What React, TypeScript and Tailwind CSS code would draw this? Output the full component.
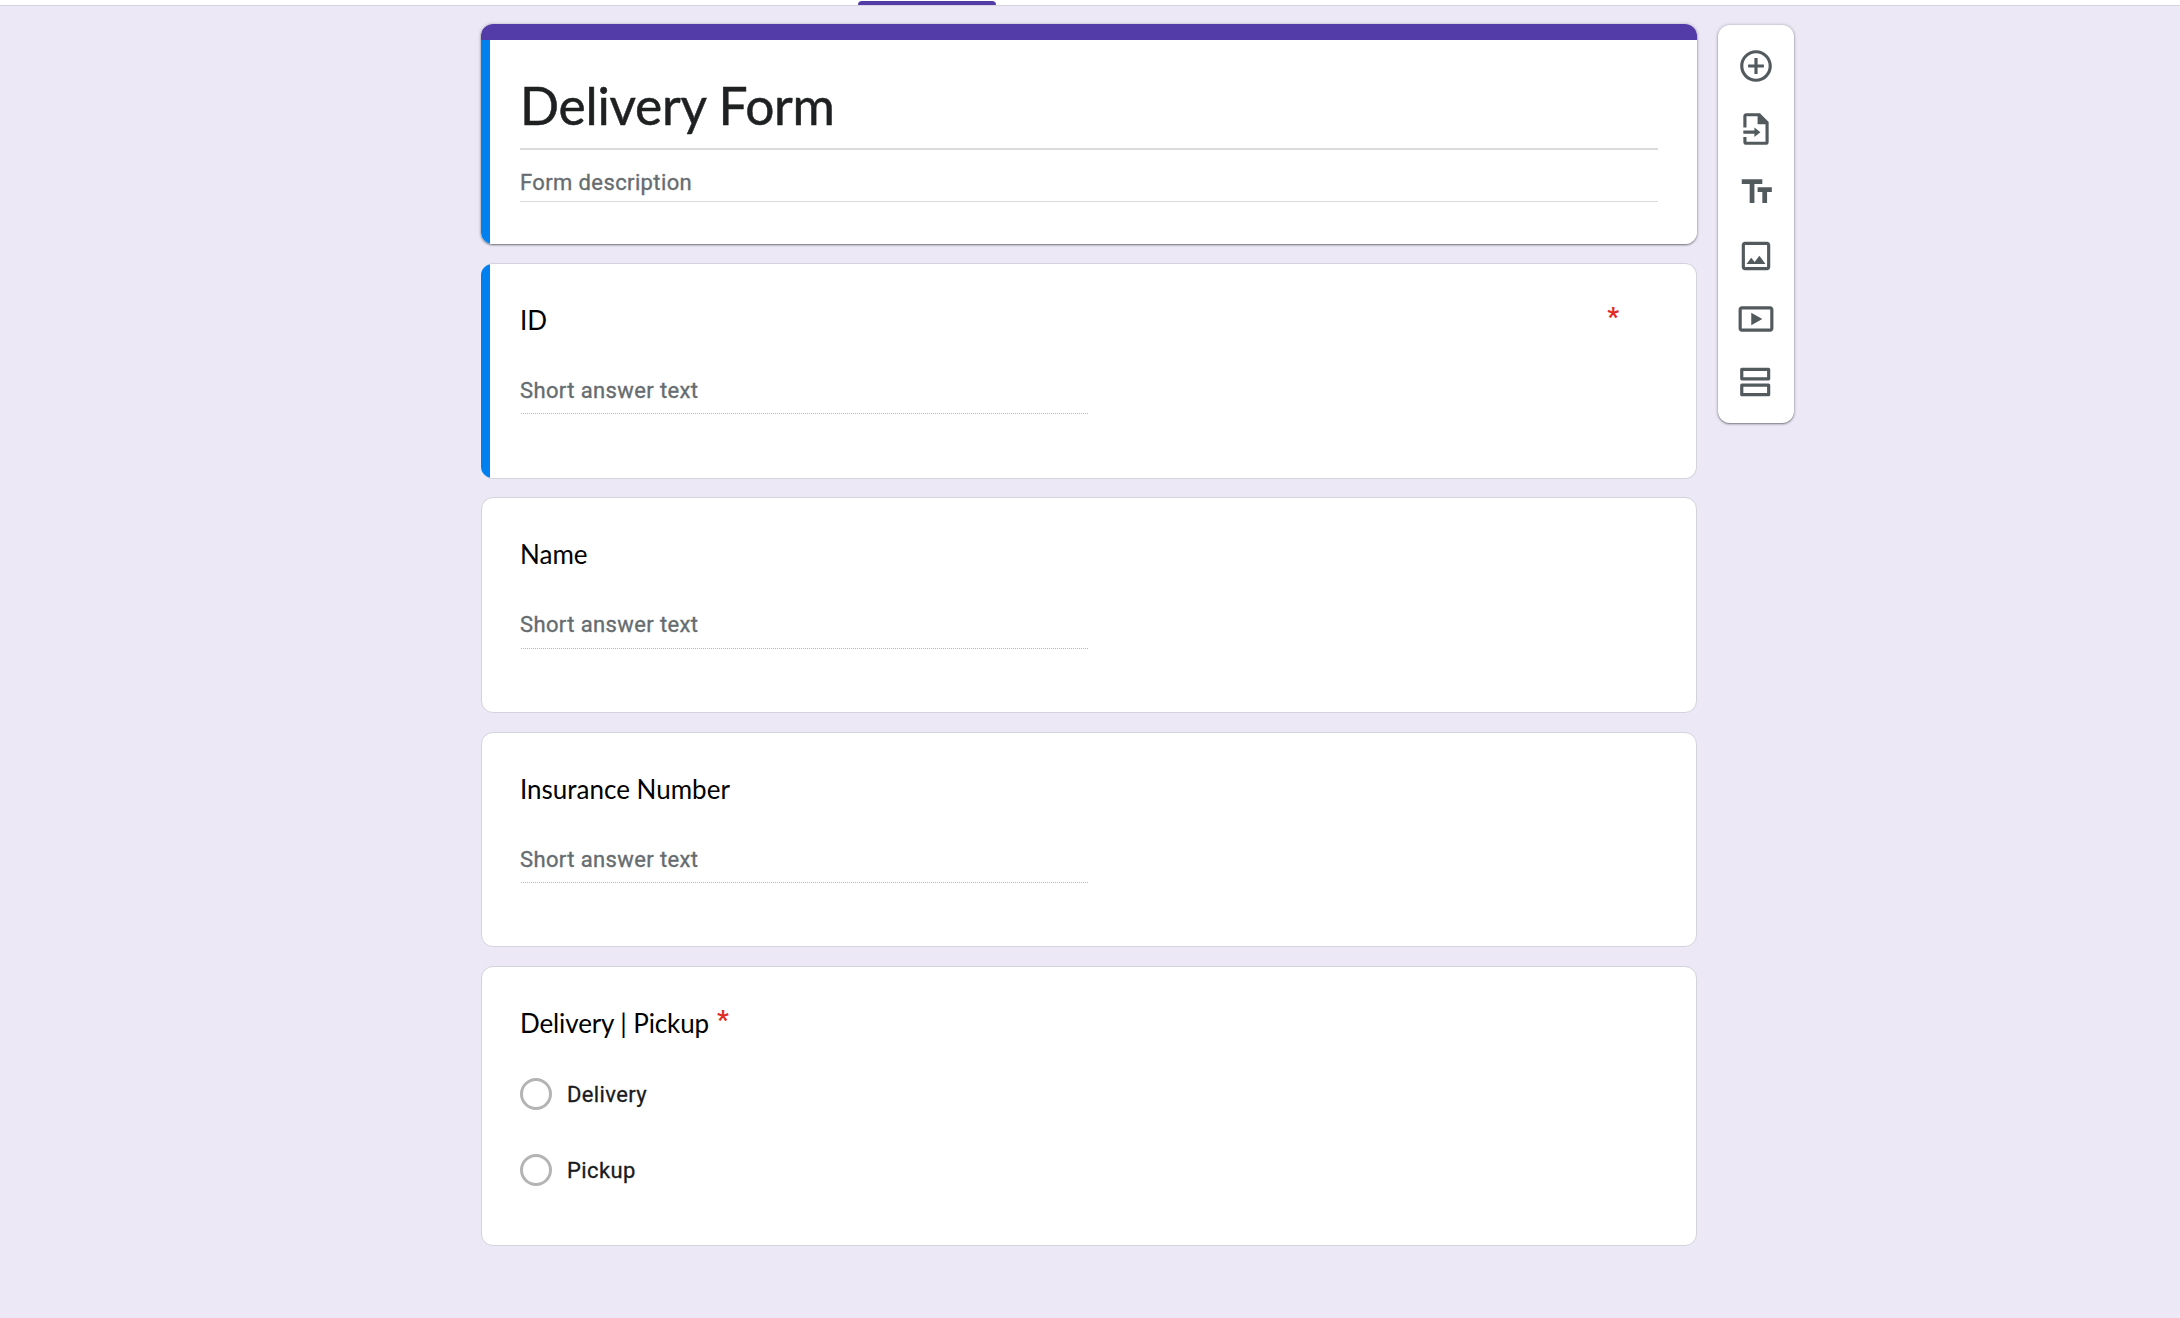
import type { ReactNode } from "react";

function Icon({ children }: { children: ReactNode }) {
  return (
    <button className="block size-[38px]">
      <svg viewBox="0 0 24 24" className="size-[38px]" fill="currentColor">
        {children}
      </svg>
    </button>
  );
}

function Toolbar() {
  return (
    <aside className="mt-px flex h-[398px] w-[76px] flex-col items-center justify-between rounded-[12px] bg-white pt-[22px] pb-[22px] text-[#535a5e] shadow-[0_1px_2px_rgba(60,64,67,0.6),0_0_3px_1px_rgba(60,64,67,0.16)]">
      <Icon>
        <path d="M13 7h-2v4H7v2h4v4h2v-4h4v-2h-4V7zm-1-5C6.48 2 2 6.48 2 12s4.48 10 10 10 10-4.48 10-10S17.52 2 12 2zm0 18c-4.41 0-8-3.59-8-8s3.59-8 8-8 8 3.59 8 8-3.59 8-8 8z" />
      </Icon>
      <Icon>
        <path d="M6 2h8.500l5.500 5.500V20a2 2 0 0 1-2 2H6a2 2 0 0 1-2-2v-3h2v3h12V9h-5V4H6v7H4V4a2 2 0 0 1 2-2z" />
        <path d="M4 13h7v-2l3.800 3-3.800 3v-2H4z" />
      </Icon>
      <Icon>
        <path d="M3 4v3h5v12h3V7h5V4H3zm19 5h-9v3h3v7h3v-7h3V9z" />
      </Icon>
      <Icon>
        <path d="M19 5v14H5V5h14m0-2H5c-1.100 0-2 .9-2 2v14c0 1.100.9 2 2 2h14c1.100 0 2-.9 2-2V5c0-1.100-.9-2-2-2z" />
        <path d="M14.140 11.860l-3 3.870L9 13.140 6 17h12l-3.860-5.140z" />
      </Icon>
      <Icon>
        <path d="M21 6v12H3V6h18m0-2H3c-1.100 0-2 .9-2 2v12c0 1.100.9 2 2 2h18c1.100 0 2-.9 2-2V6c0-1.100-.9-2-2-2z" />
        <path d="M9 8v8l7-4z" />
      </Icon>
      <Icon>
        <g fill="none" stroke="currentColor" strokeWidth="2" strokeLinejoin="round">
          <path d="M3 4h17v6H3zM3 14h17v6H3z" />
        </g>
      </Icon>
    </aside>
  );
}

function Star() {
  return (
    <span className="-mt-[3px] h-[36px] font-['Roboto',sans-serif] text-[26px] leading-[36px] font-bold text-[#e12d26]">*</span>
  );
}

function Title({ children }: { children: ReactNode }) {
  return <h2 className="font-['Lato',sans-serif] text-[26px] leading-[36px] text-black">{children}</h2>;
}

function DottedRule() {
  return (
    <div className="ml-[2px] h-px w-[568px] bg-[repeating-linear-gradient(90deg,#b9b9b9_0_1px,transparent_1px_2px)]" />
  );
}

type ShortAnswerProps = { title: string; required?: boolean; selected?: boolean; box: string; answer: string };

function ShortAnswer({ title, required, selected, box, answer }: ShortAnswerProps) {
  return (
    <section className={`${box} flex overflow-hidden rounded-[12px] border border-[#d3d3dc] bg-white ${selected ? "border-l-0" : ""}`}>
      {selected && <div className="-my-px w-[9px] shrink-0 bg-[#0080ee]" />}
      <div className={`grow pt-[38px] pr-[77px] ${selected ? "pl-[29px]" : "pl-[37px]"}`}>
        <div className="flex justify-between pl-px">
          <Title>{title}</Title>
          {required && <Star />}
        </div>
        <p className={`${answer} mt-[38px] pl-px text-[22px] leading-[30px] tracking-[0.38px] text-[#666c70] [-webkit-text-stroke:0.35px]`}>
          Short answer text
        </p>
        <DottedRule />
      </div>
    </section>
  );
}

function Option({ label }: { label: string }) {
  return (
    <label className="flex h-8 items-center gap-[15px]">
      <span className="size-8 rounded-full border-[3px] border-[#b4b4b4]" />
      <span className="pt-px text-[22px] leading-[30px] tracking-[0.38px] text-[#1a1b1d] [-webkit-text-stroke:0.3px]">{label}</span>
    </label>
  );
}

export default function App() {
  return (
    <div className="flex h-[1318px] w-[2180px] flex-col overflow-hidden bg-[#ece8f6] font-['Roboto',sans-serif]">
      <header className="h-[6px] shrink-0 border-b border-[#d6d2e0] bg-white pt-px">
        <div className="ml-[858px] h-1 w-[138px] rounded-t-[4px] bg-[#533ba8]" />
      </header>
      <div className="mt-[18px] flex items-start gap-[21px] pl-[481px]">
        <main className="w-[1216px]">
          <section className="h-[220px] rounded-[12px] shadow-[0_1px_2px_rgba(60,64,67,0.65),0_0_3px_1px_rgba(60,64,67,0.15)]">
            <div className="flex h-[220px] flex-col overflow-hidden rounded-[12px] bg-white">
              <div className="h-4 shrink-0 bg-[#533ba8]" />
              <div className="flex grow">
                <div className="w-[9px] shrink-0 bg-[#0080ee]" />
                <div className="mr-[39px] ml-[30px] grow pt-[35px]">
                  <h1 className="border-b-2 border-[#dadada] pb-[13px] font-['Lato',sans-serif] text-[51.5px] leading-[60px] tracking-[-0.25px] text-[#1f2021] [-webkit-text-stroke:0.5px]">
                    Delivery Form
                  </h1>
                  <p className="mt-[18px] border-b border-[#dadada] pb-[3px] text-[22px] leading-[30px] tracking-[0.38px] text-[#666c70] [-webkit-text-stroke:0.35px]">
                    Form description
                  </p>
                </div>
              </div>
            </div>
          </section>
          <ShortAnswer title="ID" required selected box="mt-[19px] h-[216px]" answer="pb-[7px]" />
          <ShortAnswer title="Name" box="mt-[18px] h-[216px]" answer="pb-[8px]" />
          <ShortAnswer title="Insurance Number" box="mt-[19px] h-[215px]" answer="pb-[7px]" />
          <section className="mt-[19px] h-[280px] rounded-[12px] border border-[#d3d3dc] bg-white pt-[38px] pl-[38px]">
            <div className="flex gap-[8px] tracking-[-0.12px]">
              <Title>Delivery | Pickup</Title>
              <Star />
            </div>
            <div className="mt-[37px] flex flex-col gap-11">
              <Option label="Delivery" />
              <Option label="Pickup" />
            </div>
          </section>
        </main>
        <Toolbar />
      </div>
    </div>
  );
}
